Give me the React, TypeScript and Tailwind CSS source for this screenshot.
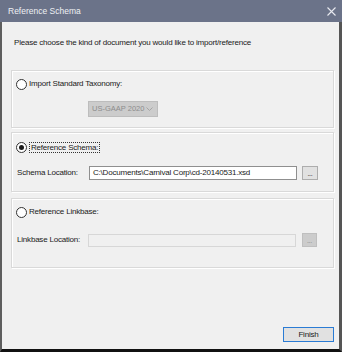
import React from "react";

function Radio({ checked }: { checked?: boolean }) {
  return (
    <span className="w-[11px] h-[11px] rounded-full border border-[#333] bg-white flex items-center justify-center shrink-0">
      {checked && <span className="w-[5px] h-[5px] rounded-full bg-[#1a1a1a]" />}
    </span>
  );
}

export default function App() {
  return (
    <div className="w-[342px] h-[352px] flex flex-col bg-[#f0f0f0] text-[8px] leading-[10px] tracking-[-0.2px] whitespace-nowrap text-[#1a1a1a] font-['Liberation_Sans',Arial,sans-serif]">
      <div className="h-[22px] shrink-0 bg-[#6b7389] flex items-center justify-between pl-[8px] pr-[6px] text-[#eef0f4] text-[8.5px] tracking-normal">
        <span>Reference Schema</span>
        <svg width="9" height="9" viewBox="0 0 9 9" className="text-[#e8eaf0]">
          <path d="M0.5 0.5 L8.5 8.5 M8.5 0.5 L0.5 8.5" stroke="currentColor" strokeWidth="1.1" />
        </svg>
      </div>
      <div className="flex-1 flex flex-col border-l-2 border-l-[#5e5e5e] border-r-[3px] border-r-[#555] border-b-[3px] border-b-[#111] pl-[9px] pr-[5px]">
        <div className="mt-[16px] ml-[3px]">Please choose the kind of document you would like to import/reference</div>

        <div className="mt-[22px] h-[58px] border border-[#d9d9d9] shadow-[inset_1px_1px_0_#fff,1px_1px_0_#fff] flex flex-col">
          <div className="mt-[7px] ml-[4px] h-[12px] flex items-center gap-[2px]">
            <Radio />
            <span>Import Standard Taxonomy:</span>
          </div>
          <div className="mt-[11px] ml-[76px] w-[70px] h-[16px] bg-[#cccccc] border border-[#bdbdbd] flex items-center justify-between pl-[3px] pr-[4px] text-[#8c8c8c] text-[7.5px] tracking-normal">
            <span>US-GAAP 2020</span>
            <svg width="7" height="4" viewBox="0 0 7 4" className="shrink-0">
              <path d="M0.5 0.5 L3.5 3.5 L6.5 0.5" stroke="#a5a5a5" fill="none" strokeWidth="1" />
            </svg>
          </div>
        </div>

        <div className="mt-[4px] h-[60px] border border-[#d9d9d9] shadow-[inset_1px_1px_0_#fff,1px_1px_0_#fff] flex flex-col">
          <div className="mt-[8px] ml-[4px] h-[12px] flex items-center gap-[2px]">
            <Radio checked />
            <span className="border border-dotted border-[#333] px-[1px] leading-[9px]">Reference Schema:</span>
          </div>
          <div className="mt-[13px] ml-[5px] flex items-center">
            <span className="w-[72px]">Schema Location:</span>
            <div className="w-[208px] h-[14px] bg-white border border-[#8f8f8f] flex items-center pl-[3px]">
              C:\Documents\Carnival Corp\cd-20140531.xsd
            </div>
            <div className="ml-[5px] w-[16px] h-[14px] bg-[#e1e1e1] border border-[#adadad] flex items-center justify-center text-[7px] leading-[7px]">...</div>
          </div>
        </div>

        <div className="mt-[6px] h-[70px] border border-[#d9d9d9] shadow-[inset_1px_1px_0_#fff,1px_1px_0_#fff] flex flex-col">
          <div className="mt-[7px] ml-[4px] h-[12px] flex items-center gap-[2px]">
            <Radio />
            <span>Reference Linkbase:</span>
          </div>
          <div className="mt-[15px] ml-[5px] flex items-center">
            <span className="w-[71px]">Linkbase Location:</span>
            <div className="w-[208px] h-[13px] bg-[#f0f0f0] border border-[#d7d7d7]" />
            <div className="ml-[6px] w-[15px] h-[14px] bg-[#cccccc] border border-[#bfbfbf] flex items-center justify-center text-[7px] leading-[7px] text-[#8a8a8a]">...</div>
          </div>
        </div>

        <div className="mt-[59px] self-end w-[51px] h-[15px] bg-[#e1e1e1] border border-[#2a7bd4] flex items-center justify-center">
          Finish
        </div>
      </div>
    </div>
  );
}
